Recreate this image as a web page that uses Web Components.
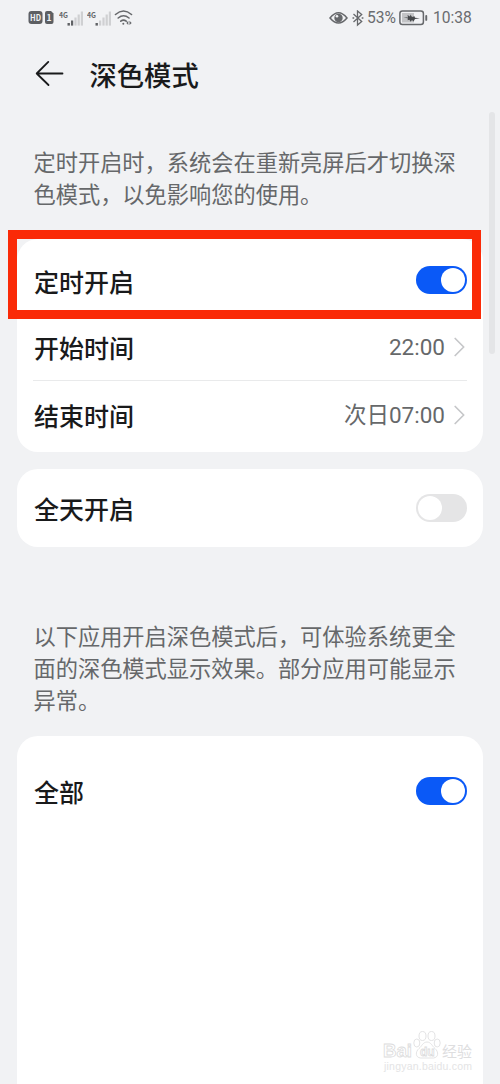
<!DOCTYPE html>
<html lang="zh-CN">
<head>
<meta charset="utf-8">
<title>深色模式</title>
<style>
html,body{margin:0;padding:0;background:#f1f2f4;overflow:hidden}
body{font-family:"Noto Sans CJK SC",sans-serif;color:#191a1b}
</style>
</head>
<body>
<settings-page></settings-page>
<script>
const define = (name, html, after) => customElements.define(name, class extends HTMLElement {
  connectedCallback() {
    if (this.shadowRoot) return;
    const t = document.createElement('template');
    t.innerHTML = html;
    this.attachShadow({mode: 'open'}).append(t.content.cloneNode(true));
    if (after) after(this, this.shadowRoot);
  }
});

define('signal-bars', `
<style>
:host{display:block;width:25px;height:17px}
svg{display:block}
text{font:700 7.5px "Noto Sans CJK SC",sans-serif;fill:#66686b}
.b{fill:#cfd0d2}.on{fill:#606265}
</style>
<svg width="25" height="17" viewBox="0 0 25 17"><text x="0" y="7.500" textLength="9" lengthAdjust="spacingAndGlyphs">4G</text>
<rect class="b" x="8.5" y="13" width="2.4" height="2.600"/><rect class="b" x="12" y="10.5" width="2.2" height="5.100"/><rect class="b" x="15.4" y="7.5" width="2.2" height="8.1"/><rect class="b" x="18.6" y="4.500" width="2.2" height="11.100"/><rect class="b" x="21.8" y="1.500" width="2.2" height="14.100"/></svg>`,
(el, root) => {
  const n = Number(el.getAttribute('level'));
  root.querySelectorAll('rect').forEach((r, i) => { if (i < n) r.classList.add('on'); });
});

define('status-bar', `
<style>
:host{display:flex;height:36px;box-sizing:border-box;padding:0 28px;align-items:center;justify-content:space-between;color:#6a6c6f;font-family:Roboto,"Noto Sans CJK SC",sans-serif;font-size:15.600px;line-height:36px}
div{display:flex;align-items:center}
svg{display:block;flex:none}
.hd{font:700 8.5px "Noto Sans CJK SC",sans-serif;fill:#f1f2f4}
</style>
<div>
<svg width="30" height="16" viewBox="0 0 30 16"><rect x=".5" y="1" width="14" height="13" rx="3" fill="#5d5f62"/><text class="hd" x="2" y="10.700" textLength="11" lengthAdjust="spacingAndGlyphs">HD</text><path d="M19 1h4l2.5 2.5v8.500a2 2 0 0 1-2 2h-4.500a2 2 0 0 1-2-2v-9a2 2 0 0 1 2-2z" fill="#5d5f62"/><text class="hd" x="18.6" y="10.700">1</text></svg>
<signal-bars level="2" style="margin-left:1px"></signal-bars>
<signal-bars level="1" style="margin-left:3px"></signal-bars>
<svg width="20" height="18" viewBox="0 0 20 18" style="margin-left:2px" fill="none" stroke="#66686b" stroke-width="1.6" stroke-linecap="round"><path d="M1.500 5.500Q9.500-1.500 17.500 5.500M4.200 9Q9.500 4.500 15 9M6.800 12.200Q9.500 10 12.200 12.200"/><circle cx="9.300" cy="14.700" r="1" fill="#66686b" stroke="none"/><path d="M14.300 11.700l-2 2.200 2 2.200zM15.500 11.700l2.200 2.200-2.200 2.200z" fill="#66686b" stroke="none"/></svg>
</div>
<div>
<svg width="19" height="15" viewBox="0 0 19 15"><path d="M1 7Q9.500-3.500 18 7Q9.500 17 1 7z" fill="none" stroke="#66686b" stroke-width="1.5"/><circle cx="9.500" cy="7" r="4.200" fill="#66686b"/><circle cx="8" cy="5.200" r="1.300" fill="#f1f2f4"/></svg>
<svg width="12" height="17" viewBox="0 0 12 17" style="margin-left:4px" fill="none" stroke="#66686b" stroke-width="1.300"><path d="M1.500 4L9.700 11.500 5.500 15V1L9.700 4.500 1.500 12"/><path d="M.5 8h1.700M9.700 8h1.700" stroke-width="1.600"/></svg>
<span style="margin-left:3px;width:32px">53%</span>
<svg width="29" height="16" viewBox="0 0 29 16"><rect x=".9" y="1" width="23.500" height="13.500" rx="2.500" fill="none" stroke="#66686b" stroke-width="1.500"/><rect x="3" y="3" width="12" height="9.500" fill="#c3c4c6"/><path d="M4.500 7.200l4.500.2-.5-2.400 2.500 1.500.5-2 1.500 2.500 2.500-.8.500 1.500 5 .5-5 .8-1.500 2.500-1.500-1.500-1.500 1.700-1-2-2 .5.500-1.800z" fill="#46484b"/><rect x="26.300" y="5" width="1.900" height="5.800" rx=".9" fill="#66686b"/></svg>
<span style="margin-left:5px;width:39px">10:38</span>
</div>`);

define('title-bar', `
<style>
:host{display:flex;height:76px;align-items:center;padding-left:35px;gap:25.500px}
svg{display:block}
h1{margin:0;font-size:27.3px;line-height:40px;font-weight:500}
</style>
<svg width="29" height="28" viewBox="0 0 29 28" fill="none" stroke="#191a1b" stroke-width="1.800" stroke-linecap="round" stroke-linejoin="round"><path d="M27.500 13.500H1.700M13.300 1.900L1.700 13.500 13.500 25"/></svg>
<h1><slot></slot></h1>`);

define('note-text', `
<style>:host{display:block;padding:0 33.500px;color:#66686a;font-size:22.220px;line-height:32px;white-space:nowrap}</style><slot></slot>`);

define('settings-card', `
<style>:host{display:block;box-sizing:border-box;margin:0 17px;background:#fff;border-radius:21px}</style><slot></slot>`);

define('settings-row', `
<style>
:host{display:flex;position:relative;height:67px;box-sizing:border-box;margin:0 16px;align-items:center;justify-content:space-between}
:host([divided]){border-bottom:1px solid #e9eaeb}
.l{font-size:25px;line-height:36px;font-weight:500;padding-left:1px}
</style>
<span class="l"><slot name="label"></slot></span><slot></slot>`);

define('toggle-switch', `
<style>
:host{display:flex;box-sizing:border-box;width:51px;height:28px;border-radius:14px;padding:2px;background:#e5e5e6}
i{width:24px;height:24px;border-radius:50%;background:#fff}
:host([on]){background:#0a59f7;justify-content:flex-end}
</style><i></i>`);

define('value-link', `
<style>
:host{display:flex;align-items:center;gap:9px;color:#66686a;font-family:Roboto,"Noto Sans CJK SC",sans-serif;font-size:22.500px;line-height:32px}
svg{display:block;margin-right:2px}
</style><slot></slot><svg width="11" height="20" viewBox="0 0 11 20" fill="none" stroke="#c6c7c9" stroke-width="1.700" stroke-linecap="round" stroke-linejoin="round"><path d="M1.200 1.500L9.700 10 1.200 18.500"/></svg>`);

define('highlight-frame', `
<style>:host{display:block;position:absolute;left:-25px;top:-17px;width:473px;height:88.500px;box-sizing:border-box;border:9px solid #fa2a07;pointer-events:none}</style>`);

define('scroll-thumb', `
<style>:host{display:block;position:absolute;left:489px;top:112px;width:6px;height:242px;border-radius:3px;background:#e4e5e7}</style>`);

define('corner-watermark', `
<style>
:host{display:block;position:absolute;left:382px;top:1026px;width:94px;height:50px}
text{font-family:"Liberation Sans","Noto Sans CJK SC",sans-serif;fill:#fff;stroke:#dcdcdd;stroke-width:.8px}
.c{fill:#dededf;stroke:none}
.u{fill:#e4e4e5;stroke:none}
</style>
<svg width="94" height="50" viewBox="0 0 94 50">
<g fill="#fff" stroke="#e0e0e1" stroke-width=".9"><ellipse cx="40.500" cy="10" rx="3.500" ry="4.500"/><ellipse cx="49.500" cy="10" rx="3.500" ry="4.500"/><ellipse cx="34.800" cy="17" rx="3" ry="4"/><ellipse cx="55.200" cy="17" rx="3" ry="4"/><path d="M45 16c-4 0-5 4-8 6.500-4 3.500-3.500 9 1.500 9.500h13c5-.5 5.500-6 1.500-9.500-3-2.500-4-6.500-8-6.500z"/></g>
<text x="1" y="31" font-size="18" font-weight="700" textLength="29" lengthAdjust="spacingAndGlyphs">Bai</text><text x="38" y="30" font-size="12" font-weight="700">du</text><text class="c" x="60" y="31" font-size="15" textLength="30" lengthAdjust="spacingAndGlyphs">经验</text>
<text class="u" x="2" y="44" font-size="10.500" textLength="88">jingyan.baidu.com</text></svg>`);

define('settings-page', `
<style>
:host{display:flex;flex-direction:column;position:relative;width:500px;height:1084px;overflow:hidden;background:#f1f2f4}
.n1{margin-top:33px}
.c1{margin-top:30px;height:213px;padding-top:8px}
.c1 toggle-switch{margin-bottom:1px}
.c2{margin-top:17px;height:78px;padding-top:5.500px}
.n2{margin-top:72px}
.c3{margin-top:21px;flex:1;padding-top:21.500px;border-radius:21px 21px 0 0}
</style>
<status-bar></status-bar>
<title-bar>深色模式</title-bar>
<note-text class="n1">定时开启时，系统会在重新亮屏后才切换深<br>色模式，以免影响您的使用。</note-text>
<settings-card class="c1">
<settings-row><span slot="label">定时开启</span><toggle-switch on></toggle-switch><highlight-frame></highlight-frame></settings-row>
<settings-row divided><span slot="label">开始时间</span><value-link>22:00</value-link></settings-row>
<settings-row><span slot="label">结束时间</span><value-link>次日07:00</value-link></settings-row>
</settings-card>
<settings-card class="c2"><settings-row><span slot="label">全天开启</span><toggle-switch></toggle-switch></settings-row></settings-card>
<note-text class="n2">以下应用开启深色模式后，可体验系统更全<br>面的深色模式显示效果。部分应用可能显示<br>异常。</note-text>
<settings-card class="c3"><settings-row><span slot="label">全部</span><toggle-switch on></toggle-switch></settings-row></settings-card>
<scroll-thumb></scroll-thumb>
<corner-watermark></corner-watermark>`);
</script>
</body>
</html>
